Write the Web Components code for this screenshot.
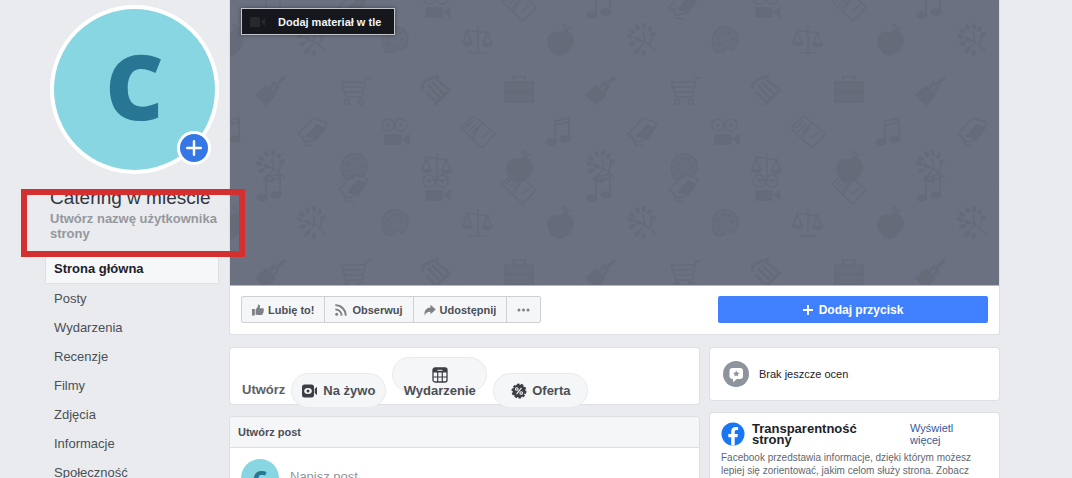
<!DOCTYPE html>
<html lang="pl">
<head>
<meta charset="utf-8">
<title>Catering w mieście</title>
<style>
html { scrollbar-width: none; }
body { margin: 0; background: #e9ebee; color: #1d2129; font-family: "Liberation Sans", Arial, sans-serif; font-size: 13px; }
</style>
</head>
<body>
<page-shell>
  <page-profile slot="side" initial="C">
    <span slot="name">Catering w mieście</span>
    <span slot="handle">Utwórz nazwę użytkownika strony</span>
  </page-profile>
  <side-nav slot="side">
    <nav-item active>Strona główna</nav-item>
    <nav-item>Posty</nav-item>
    <nav-item>Wydarzenia</nav-item>
    <nav-item>Recenzje</nav-item>
    <nav-item>Filmy</nav-item>
    <nav-item>Zdjęcia</nav-item>
    <nav-item>Informacje</nav-item>
    <nav-item>Społeczność</nav-item>
  </side-nav>
  <page-cover slot="cover">Dodaj materiał w tle</page-cover>
  <action-bar slot="cover">
    <action-button icon="like">Lubię to!</action-button>
    <action-button icon="feed">Obserwuj</action-button>
    <action-button icon="share">Udostępnij</action-button>
    <action-button icon="dots" label="Więcej"></action-button>
    <span slot="cta">Dodaj przycisk</span>
  </action-bar>
  <create-bar slot="feed">
    <span slot="title">Utwórz</span>
    <pill-button icon="live">Na żywo</pill-button>
    <pill-button icon="calendar" stacked>Wydarzenie</pill-button>
    <pill-button icon="offer">Oferta</pill-button>
  </create-bar>
  <post-composer slot="feed" placeholder="Napisz post" initial="C">Utwórz post</post-composer>
  <rating-card slot="aside">Brak jeszcze ocen</rating-card>
  <transparency-card slot="aside">
    <span slot="title">Transparentność strony</span>
    <span slot="more">Wyświetl więcej</span>
    Facebook przedstawia informacje, dzięki którym możesz lepiej się zorientować, jakim celom służy strona. Zobacz
  </transparency-card>
</page-shell>

<script>
const define = (name, html, setup) => customElements.define(name, class extends HTMLElement {
  constructor() {
    super();
    this.attachShadow({ mode: "open" }).innerHTML = html;
  }
  connectedCallback() { if (setup) setup(this, this.shadowRoot); }
});

const icons = {
  like: `<svg width="12" height="12" viewBox="0 0 12 12" fill="currentColor"><path d="M0 5h2.8v6.5H0zM3.6 5.4 5.7 3 6 .4C7.6.2 8.4 1.500 7.900 3.100L7.500 4.300h3.200c1 0 1.500 1 .9 1.800.4.5.3 1.200-.2 1.600.3.600 0 1.200-.5 1.500.2.900-.4 1.800-1.400 1.800H5.700l-2.100-.6z"/></svg>`,
  feed: `<svg width="12" height="12" viewBox="0 0 12 12" fill="none" stroke="currentColor" stroke-width="1.800"><circle cx="1.700" cy="10.200" r="1.500" fill="currentColor" stroke="none"/><path d="M.3 5.300a6.300 6.300 0 0 1 6.300 6.400M.3 1.200a10.400 10.400 0 0 1 10.500 10.500"/></svg>`,
  share: `<svg width="12" height="12" viewBox="0 0 12 12" fill="currentColor"><path d="M6.500.8 11.800 5.600 6.500 10.300V7.700C3.600 7.500 2 8.700.7 11.400-.1 7 2 3.700 6.500 3.400z"/></svg>`,
  dots: `<svg width="13" height="4" viewBox="0 0 13 4" fill="currentColor"><circle cx="2" cy="2" r="1.500"/><circle cx="6.500" cy="2" r="1.500"/><circle cx="11" cy="2" r="1.500"/></svg>`,
  live: `<svg width="16" height="14" viewBox="0 0 16 14"><rect x="0" y=".5" width="12" height="13" rx="2.500" fill="#3b3e44"/><path d="M12.700 5 15 2.800v8.400L12.700 9z" fill="#3b3e44"/><ellipse cx="6" cy="7" rx="3.800" ry="3" fill="#f5f6f7"/><circle cx="6" cy="7" r="1.500" fill="#3b3e44"/></svg>`,
  calendar: `<svg width="16" height="16" viewBox="0 0 16 16"><rect x="1" y="1" width="14" height="14" rx="2" fill="#f5f6f7" stroke="#3b3e44" stroke-width="1.300"/><path d="M1 5.500V3a2 2 0 0 1 2-2h10a2 2 0 0 1 2 2v2.500z" fill="#3b3e44"/><path d="M5.500 3.300h5" stroke="#f5f6f7"/><path d="M5.700 5v10M10.300 5v10M1 10h14" stroke="#3b3e44" stroke-width="1.200"/></svg>`,
  offer: `<svg width="16" height="16" viewBox="0 0 16 16"><circle cx="8" cy="8" r="6.400" fill="#3b3e44"/><circle cx="8" cy="8" r="6.600" fill="none" stroke="#3b3e44" stroke-width="1.800" stroke-dasharray="2.600 1.500"/><g fill="none" stroke="#f5f6f7" stroke-width="1.100"><circle cx="5.800" cy="6" r="1.300"/><circle cx="10.200" cy="10" r="1.300"/><path d="m10.500 4.800-5 6.400"/></g></svg>`
};

define("page-shell", `
<style>
:host { display: grid; grid-template-columns: 174px minmax(0, 1fr); column-gap: 11px; align-items: start; padding: 0 73px 0 45px; }
.top { background: #fff; border: 1px solid #dddfe2; border-top: 0; border-radius: 0 0 3px 3px; margin: 0 -1px; }
.columns { display: grid; grid-template-columns: minmax(0, 1fr) 289px; column-gap: 11px; margin-top: 13px; align-items: start; }
.feed, .aside { display: grid; row-gap: 13px; }
</style>
<aside><slot name="side"></slot></aside>
<main>
  <div class="top"><slot name="cover"></slot></div>
  <div class="columns">
    <div class="feed"><slot name="feed"></slot></div>
    <div class="aside"><slot name="aside"></slot></div>
  </div>
</main>`);

define("page-avatar", `
<style>
:host { display: grid; place-items: center; border-radius: 50%; background: #89d6e3; color: #277693; font: 800 90px/1 "Open Sans", sans-serif; }
</style><slot></slot>`);

define("page-profile", `
<style>
:host { display: block; padding: 5px 0 0 5px; }
.photo { position: relative; width: 169px; }
page-avatar { box-sizing: border-box; width: 169px; height: 169px; padding-bottom: 9px; border: 4px solid #fff; }
button { position: absolute; right: 8px; bottom: 9px; width: 34px; height: 34px; padding: 0; border: 3px solid #fff; border-radius: 50%; background: #3578e5; color: #fff; display: grid; place-items: center; }
.identity { position: relative; padding-top: 11px; height: 70px; }
h1 { margin: 0; font-size: 19px; font-weight: 400; line-height: 26px; color: #333640; white-space: nowrap; }
a { display: block; font-weight: 700; line-height: 15px; color: #95989e; text-decoration: none; }
.mark { position: absolute; z-index: 2; top: 15px; left: -29px; right: -26px; height: 68px; box-sizing: border-box; border: 6px solid #d3302f; pointer-events: none; }
</style>
<div class="photo">
  <page-avatar></page-avatar>
  <button type="button" aria-label="Dodaj zdjęcie"><svg width="16" height="16" viewBox="0 0 16 16" stroke="#fff" stroke-width="2.400" stroke-linecap="round"><path d="M8 1.200v13.600M1.200 8h13.600"/></svg></button>
</div>
<div class="identity">
  <h1><slot name="name"></slot></h1>
  <a href="#username"><slot name="handle"></slot></a>
  <div class="mark"></div>
</div>`, (el, root) => { root.querySelector("page-avatar").textContent = el.getAttribute("initial"); });

define("side-nav", `<style>:host { display: block; }</style><nav><slot></slot></nav>`);

define("nav-item", `
<style>
:host { display: block; }
a { display: block; padding: 0 9px; line-height: 29px; color: #4b4f56; text-decoration: none; }
:host([active]) a { line-height: 28px; background: #f6f7f9; border-bottom: 1px solid #dddfe2; box-shadow: inset 1px 0 #dddfe2, inset -1px 0 #dddfe2; color: #1d2129; font-weight: 700; }
</style><a href="#section"><slot></slot></a>`);

/* Faint tiled motifs, each centred on its own origin. */
const motifs = {
  tree: `<path d="M14 11 3 2-8-3M3 2-5 10M3 2 1-9M7 6 10-3"/><path stroke-width="4" stroke-linecap="round" d="m-13-4 2 1m0 7 3-1m-3-12 2 1m4-6 1 2m6-3v2m6 1-1 2m5 4-2 1M-6 12l2-2m5 4 1-2M-5-1l2 1"/>`,
  palette: `<path fill="currentColor" fill-opacity=".5" d="M-9 12C-17 0-11-13 0-13S16-3 11 6 2 4 1 8-3 13-9 12z"/><path stroke-width="3" stroke-linecap="round" d="M-7 4h1m-1-7h1m4-5h1m5 1h1m2 6h1"/>`,
  scales: `<path d="M1-14v26M-11-10 13-7M-8 13H10M-10-9l-4 12h9zM10-7 6 4h9z"/><path fill="currentColor" d="M-14 3a5 5 0 0 0 9 0zM6 4a5 5 0 0 0 9 0z"/>`,
  apple: `<path fill="currentColor" d="M0-7c6-4 12 0 13 6S6 15 0 15-12 8-12 2-7-10 0-7z"/><path d="M1-7q4-1 11-6M7-9q-6-4-3-7 5 3 3 7"/>`,
  brush: `<path fill="currentColor" d="m-15 5 10-9 9 9-9 10z"/><path stroke-width="3" d="m-1-2 4-5 4 4-4 5M6-6 14-13"/><path d="m-12 8 3-3m0 6 3-4"/>`,
  cart: `<path d="M-13-8H10M-11-3H8M-9 2H8M-9 7H7M8 7 12-12h5M-13-8l5 15"/><circle cx="-7" cy="12" r="2.500"/><circle cx="7" cy="12" r="2.500"/>`,
  pillar: `<path stroke-width="3" d="M-13-1q-2-5 3-8T3-14M-2 15 15-1M-8-5l12 13M-4-8 8 4M0-11 12-1M-10 2-1 11"/>`,
  bag: `<path fill="currentColor" fill-opacity=".6" d="M-14-8h28v9h-28zM-14 2h28v10h-28z"/><path d="M-6-8v-5H6v5"/>`,
  note: `<path stroke-width="2" d="M-5 10V-10L9-13V8M-5-6 9-9"/><ellipse cx="-9" cy="11" rx="5" ry="3" fill="currentColor"/><ellipse cx="5" cy="8" rx="5" ry="3" fill="currentColor"/>`,
  cap: `<path d="M-15 3 0-13 14-8 10-1 4 8-6 11z"/><path fill="currentColor" d="m-6 5 10-11 8 3-8 11z"/><path d="m-11 4 3 10 8 1"/>`,
  camera: `<circle cx="-7" cy="-6" r="6"/><circle cx="6" cy="-6" r="6"/><circle cx="-7" cy="-6" r="1"/><circle cx="6" cy="-6" r="1"/><path fill="currentColor" d="M-10 4H6v9h-16zM8 8l6-4v9z"/>`,
  book: `<path d="M-17-3-5-15 4-9 17 3 4 17-6 8zM-6 8 4-9M-13-3l8-7m-5 11 8-8M-7 4l8-9M3 7l8-6"/>`
};
const rowA = ["tree", "palette", "scales", "apple"];
const rowB = ["brush", "cart", "pillar", "bag"];
const rowC = ["note", "cap", "camera", "book"];

define("page-cover", `
<style>
:host { display: block; position: relative; height: 285px; background: #6b7180; border-bottom: 1px solid #b4b7be; margin: 0; overflow: hidden; }
svg.art { display: block; width: 100%; height: 100%; color: #666b79; }
button { position: absolute; top: 8px; left: 11px; display: flex; align-items: center; gap: 12px; height: 27px; padding: 0 13px 0 8px; border: 1px solid #c3c5ca; background: #15171d; color: #f2f3f5; font: 700 11px "Liberation Sans", Arial, sans-serif; box-shadow: 0 0 4px rgba(0, 0, 0, .4); }
</style>
<svg class="art" aria-hidden="true"></svg>
<button type="button"><svg width="16" height="12" viewBox="0 0 16 12" fill="#26282e"><rect y="1" width="10" height="10" rx="1"/><path d="m11 6 4-4v8z"/></svg><slot></slot></button>`,
(el, root) => {
  const rows = [[-16, 41, rowA], [4, 41, rowC], [40, 82, rowA], [90, 41, rowB], [131, 0, rowC]];
  const defs = Object.entries(motifs).map(([id, art]) => `<g id="${id}">${art}</g>`).join("");
  const uses = rows.flatMap(([y, x, row]) => [0, 183].flatMap(dy => [-1, 0, 1, 2, 3].flatMap(tile =>
    row.map((id, i) => `<use href="#${id}" x="${x + tile * 330 + Math.round(i * 82.5)}" y="${y + dy}"/>`)))).join("");
  root.querySelector(".art").innerHTML = `<defs>${defs}</defs><g fill="none" stroke="currentColor" stroke-width="1.500">${uses}</g>`;
});

define("action-bar", `
<style>
:host { display: flex; justify-content: space-between; align-items: flex-start; padding: 10px 11px 11px; }
.group { display: flex; box-sizing: border-box; height: 27px; border: 1px solid #ced0d4; border-radius: 2px; background: #f5f6f7; }
.cta { display: flex; align-items: center; justify-content: center; gap: 6px; width: 270px; height: 27px; padding: 0; border: 0; border-radius: 2px; background: #4080ff; color: #fff; font: 700 12px "Liberation Sans", Arial, sans-serif; }
</style>
<div class="group"><slot></slot></div>
<button class="cta" type="button"><svg width="10" height="10" viewBox="0 0 10 10" stroke="#fff" stroke-width="1.800"><path d="M5 0v10M0 5h10"/></svg><slot name="cta"></slot></button>`);

define("action-button", `
<style>
:host { display: flex; }
:host(:not(:first-child)) { border-left: 1px solid #ced0d4; }
button { display: flex; align-items: center; gap: 4px; padding: 0 10px; border: 0; background: none; color: #4b4f56; font: 700 11px "Liberation Sans", Arial, sans-serif; }
:host([icon="feed"]) button { gap: 5px; }
svg { color: #7c8087; }
</style>
<button type="button"><span></span><slot></slot></button>`, (el, root) => {
  const box = root.querySelector("span");
  box.style.display = "flex";
  box.innerHTML = icons[el.getAttribute("icon")];
  if (el.hasAttribute("label")) root.querySelector("button").setAttribute("aria-label", el.getAttribute("label"));
});

const card = `:host { display: block; box-sizing: border-box; background: #fff; border-radius: 3px; box-shadow: 0 0 0 1px #dddfe2; }`;

define("create-bar", `
<style>
${card}
:host { display: flex; align-items: flex-start; gap: 6px; height: 56px; padding: 25px 12px 0; }
b { color: #5d6169; line-height: 34px; }
</style><b><slot name="title"></slot></b><slot></slot>`);

define("pill-button", `
<style>
:host { display: block; }
button { display: flex; align-items: center; justify-content: center; gap: 5px; box-sizing: border-box; width: 95px; height: 35px; padding: 0; border: 1px solid #e8eaed; border-radius: 18px; background: #f5f6f7; color: #4b4f56; font: 700 13px/15px "Liberation Sans", Arial, sans-serif; }
:host([stacked]) { margin-top: -16px; }
:host([stacked]) button { flex-direction: column; justify-content: flex-start; gap: 0; padding-top: 9px; }
span { display: flex; }
</style><button type="button"><span></span><slot></slot></button>`,
(el, root) => { root.querySelector("span").innerHTML = icons[el.getAttribute("icon")]; });

define("post-composer", `
<style>
${card}
h2 { margin: 0; padding: 0 8px; font-size: 11px; line-height: 30px; color: #4b4f56; background: #f5f6f7; border-bottom: 1px solid #dddfe2; border-radius: 3px 3px 0 0; }
.row { display: flex; gap: 11px; padding: 11px; }
page-avatar { width: 38px; height: 38px; font-size: 22px; }
input { flex: 1; min-width: 0; height: 34px; padding: 0; border: 0; outline: 0; background: none; font: 13px "Liberation Sans", Arial, sans-serif; }
input::placeholder { color: #90949c; }
</style>
<h2><slot></slot></h2>
<div class="row"><page-avatar></page-avatar><input type="text" aria-label="Napisz post"></div>`,
(el, root) => {
  root.querySelector("page-avatar").textContent = el.getAttribute("initial");
  root.querySelector("input").placeholder = el.getAttribute("placeholder");
});

define("rating-card", `
<style>
${card}
:host { display: flex; align-items: center; gap: 10px; height: 52px; padding: 0 13px; font-size: 11px; }
</style>
<svg width="26" height="26" viewBox="0 0 26 26"><circle cx="13" cy="13" r="13" fill="#8d949e"/><path d="M9.500 7h7.500a3 3 0 0 1 3 3v5a3 3 0 0 1-3 3h-3l-4 3.200V18h-.5a3 3 0 0 1-3-3v-5a3 3 0 0 1 3-3z" fill="#fff"/><path d="m13.300 9.500 1 2.100 2.200.3-1.600 1.500.4 2.200-2-1.100-2 1.100.4-2.200-1.600-1.500 2.200-.3z" fill="#8d949e"/></svg>
<slot></slot>`);

define("transparency-card", `
<style>
${card}
:host { padding: 9px 11px; }
header { display: grid; grid-template-columns: 24px 1fr 78px; column-gap: 7px; align-items: start; }
h2 { margin: 0; padding-top: 1px; width: 110px; font-size: 13px; line-height: 11px; color: #1d2129; }
a { width: 50px; font-size: 11px; line-height: 12px; color: #385898; text-decoration: none; }
p { margin: 5px 0 0; font-size: 10px; line-height: 13px; color: #616770; }
</style>
<header>
  <svg width="24" height="24" viewBox="0 0 24 24"><circle cx="12" cy="12" r="11.500" fill="#1877f2"/><path d="M10.200 23.500v-8.200H7.300V12h2.900V9.400c0-2.900 1.700-4.500 4.300-4.500 1.300 0 2.600.2 2.600.2V8h-1.500c-1.400 0-1.900.9-1.900 1.800V12h3.200l-.5 3.300h-2.700v8.200z" fill="#fff"/></svg>
  <h2><slot name="title"></slot></h2>
  <a href="#transparency"><slot name="more"></slot></a>
</header>
<p><slot></slot></p>`);
</script>
</body>
</html>
